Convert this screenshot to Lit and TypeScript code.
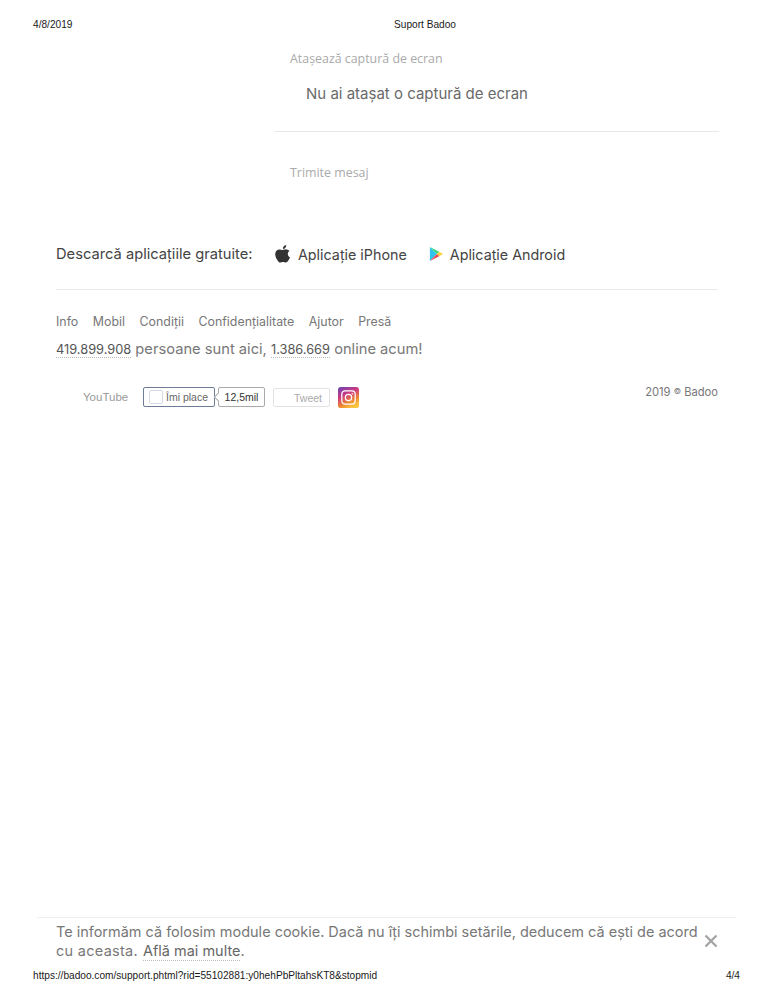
import { LitElement, html, css, svg } from "lit";
import { customElement } from "lit/decorators.js";

const apple = svg`<svg viewBox="0 0 16 18" width="16" height="18"><path fill="#333" d="M11.300 0c.1 1-.3 2-.9 2.700-.6.800-1.600 1.300-2.500 1.200-.1-1 .4-2 .9-2.600C9.400.6 10.500.1 11.300 0zM14.500 6.100c-1 .6-1.700 1.600-1.700 2.900 0 1.500.9 2.700 2.200 3.200-.4 1.200-1 2.300-1.700 3.300-.7 1-1.500 2-2.600 2-1.100 0-1.500-.6-2.700-.6-1.300 0-1.700.6-2.700.6-1.100.1-2-1.100-2.700-2.100C.9 13.300-.2 10.400.4 7.900c.4-2 2-3.500 3.900-3.500 1.200 0 2.200.7 3 .7.700 0 1.900-.8 3.200-.8 1.600 0 3 .7 4 1.800z"/></svg>`;

const play = svg`<svg viewBox="0 0 16 17" width="14" height="16"><path fill="#2fc3ee" d="M1 .5v16l8-8z"/><path fill="#38d47e" d="M1 .5l8 8 2.700-2.700z"/><path fill="#ffd23f" d="M11.700 5.800L9 8.500l2.700 2.700 4.300-2.700z"/><path fill="#ef4a55" d="M1 16.500l8-8 2.700 2.700z"/></svg>`;

const insta = svg`<svg viewBox="0 0 22 22" width="21" height="21">
<defs><linearGradient id="ig" x1="0.1" y1="0" x2="0.6" y2="1"><stop offset="0" stop-color="#6f42b5"/><stop offset="0.4" stop-color="#cf3a80"/><stop offset="0.75" stop-color="#ef8a32"/><stop offset="1" stop-color="#fbc53f"/></linearGradient></defs>
<rect width="22" height="22" rx="3" fill="url(#ig)"/>
<rect x="4" y="4" width="14" height="14" rx="3.500" fill="none" stroke="#fff" stroke-width="1.300"/>
<circle cx="11" cy="11" r="3.300" fill="none" stroke="#fff" stroke-width="1.300"/>
<circle cx="15" cy="7" r="0.800" fill="#fff"/></svg>`;

@customElement("app-root")
export class AppRoot extends LitElement {
  static styles = css`
    :host { display: block; background: #fff; font-family: "Inter", "Liberation Sans", sans-serif; }
    .page { width: 773px; height: 1000px; box-sizing: border-box; display: flex; flex-direction: column; background: #fff; overflow: hidden; }
    .print { font: 10.150px/12px "Liberation Sans", Arial, sans-serif; color: #1a1a1a; display: grid; }
    .print-top { grid-template-columns: 361px auto; padding: 19px 33px 0; }
    .print-bottom { grid-template-columns: 1fr auto; padding: 3px 33px 18px; }
    .form { margin-left: 274px; width: 445px; padding-top: 19px; }
    .lbl { font: 12.400px/18px "Open Sans", sans-serif; color: #aaa; padding-left: 16px; }
    .none { font-size: 15px; line-height: 20px; color: #6a6a6a; padding: 16px 0 0 32px; height: 47px; }
    .rule { height: 1px; background: #e9e9e9; border: 0; margin: 0; }
    .send { margin-top: 32px; height: 75px; }
    .apps { display: flex; align-items: center; margin: 0 54px 0 56px; height: 30px; font-size: 14.300px; color: #444; }
    .apps .t { width: 219px; flex: none; font-size: 14.700px; }
    .app { display: flex; align-items: center; gap: 7px; margin-right: 22px; }
    .foot { margin: 20px 55px 0 56px; }
    .links { display: flex; gap: 14.500px; margin-top: 23px; font-size: 12.400px; line-height: 18px; color: #777; }
    .stats { font-size: 14.700px; line-height: 20px; color: #777; margin-top: 8px; }
    .stats b { font-weight: 400; font-size: 12.800px; color: #555; border-bottom: 1px dotted #bbb; }
    .social { display: flex; align-items: center; margin-top: 25px; height: 24px; }
    .yt { font: 11.500px "Liberation Sans", sans-serif; color: #999; margin-left: 27px; width: 60px; }
    .like { box-sizing: border-box; width: 72px; height: 20px; border: 1px solid #6d7d97; border-radius: 2px; display: flex; align-items: center; gap: 3px; padding-left: 5px; font: 10.500px "Liberation Sans", sans-serif; color: #666; }
    .cb { width: 12px; height: 12px; border: 1px solid #d5dbe5; border-radius: 2px; }
    .count { box-sizing: border-box; width: 47px; height: 20px; margin-left: 3px; border: 1px solid #aaa; border-radius: 2px; font: 10.500px/18px "Liberation Sans", sans-serif; color: #333; text-align: center; position: relative; }
    .count::before { content: ""; position: absolute; left: -4px; top: 6px; width: 5px; height: 5px; border-left: 1px solid #aaa; border-bottom: 1px solid #aaa; background: #fff; transform: rotate(45deg); }
    .tweet { box-sizing: border-box; width: 57px; height: 19px; margin-left: 8px; border: 1px solid #e2e2e2; border-radius: 2px; font: 10.500px/18px "Liberation Sans", sans-serif; color: #aaa; text-align: right; padding-right: 7px; }
    .ig { margin-left: 8px; display: flex; }
    .copy { margin-left: auto; font-size: 11.200px; color: #777; align-self: flex-start; }
    .copy span { font-size: 8px; vertical-align: 2px; }
    .spacer { flex: 1; }
    .cookie { margin: 0 37px; border-top: 1px solid #eee; padding: 4px 0 0 19px; display: flex; height: 50px; box-sizing: border-box; font-size: 14.480px; line-height: 19px; color: #777; }
    .cookie .msg { width: 646px; }
    .line1 { white-space: nowrap; }
    .line2 { display: flex; }
    .line2 .lead { letter-spacing: .3px; margin-right: 5px; }
    .cookie b { font-weight: 400; color: #666; border-bottom: 1px dotted #bbb; }
    .x { margin: 12px 0 0 2px; flex: none; }
  `;

  render() {
    return html`<div class="page">
      <div class="print print-top"><span>4/8/2019</span><span>Suport Badoo</span></div>
      <div class="form">
        <div class="lbl">Atașează captură de ecran</div>
        <div class="none">Nu ai atașat o captură de ecran</div>
        <hr class="rule" />
        <div class="lbl send">Trimite mesaj</div>
      </div>
      <div class="apps">
        <span class="t">Descarcă aplicațiile gratuite:</span>
        <span class="app">${apple}<span>Aplicație iPhone</span></span>
        <span class="app">${play}<span>Aplicație Android</span></span>
      </div>
      <div class="foot">
        <hr class="rule" />
        <div class="links"><span>Info</span><span>Mobil</span><span>Condiții</span><span>Confidențialitate</span><span>Ajutor</span><span>Presă</span></div>
        <div class="stats"><b>419.899.908</b> persoane sunt aici, <b>1.386.669</b> online acum!</div>
        <div class="social">
          <span class="yt">YouTube</span>
          <span class="like"><span class="cb"></span>Îmi place</span>
          <span class="count">12,5mil</span>
          <span class="tweet">Tweet</span>
          <span class="ig">${insta}</span>
          <span class="copy">2019 <span>©</span> Badoo</span>
        </div>
      </div>
      <div class="spacer"></div>
      <div class="cookie">
        <div class="msg">
          <div class="line1">Te informăm că folosim module cookie. Dacă nu îți schimbi setările, deducem că ești de acord</div>
          <div class="line2"><span class="lead">cu aceasta.</span><b>Află mai multe</b><span>.</span></div>
        </div>
        <svg class="x" width="14" height="14" viewBox="0 0 14 14"><path d="M1.500 1.500l11 11M12.500 1.500l-11 11" stroke="#a5a5a5" stroke-width="2.400" fill="none"/></svg>
      </div>
      <div class="print print-bottom"><span>https://badoo.com/support.phtml?rid=55102881:y0hehPbPltahsKT8&stopmid</span><span>4/4</span></div>
    </div>`;
  }
}
